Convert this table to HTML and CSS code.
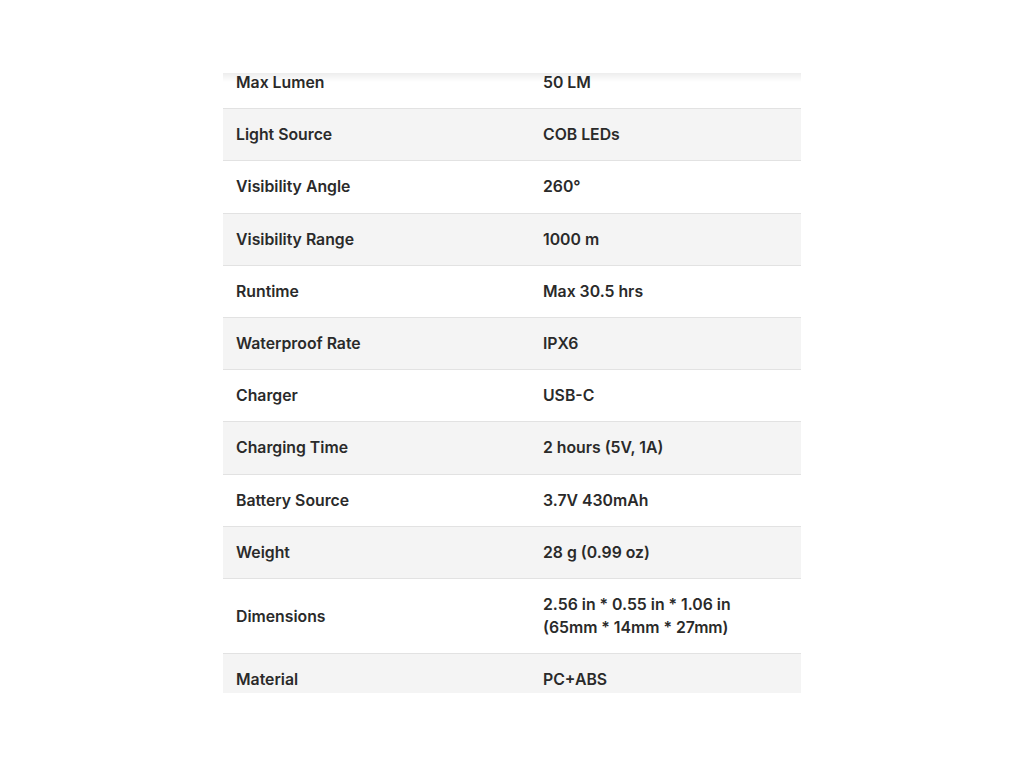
FILE: index.html
```html
<!DOCTYPE html>
<html lang="en">
<head>
<meta charset="utf-8">
<title>Specifications</title>
<link rel="stylesheet" href="styles.css">
</head>
<body>
<div class="page">
  <div class="viewport">
    <div class="fade"></div>
    <table class="specs">
      <tbody>
        <tr><th>Max Lumen</th><td>50 LM</td></tr>
        <tr><th>Light Source</th><td>COB LEDs</td></tr>
        <tr><th>Visibility Angle</th><td>260°</td></tr>
        <tr><th>Visibility Range</th><td>1000 m</td></tr>
        <tr><th>Runtime</th><td>Max 30.5 hrs</td></tr>
        <tr><th>Waterproof Rate</th><td>IPX6</td></tr>
        <tr><th>Charger</th><td>USB-C</td></tr>
        <tr><th>Charging Time</th><td>2 hours (5V, 1A)</td></tr>
        <tr><th>Battery Source</th><td>3.7V 430mAh</td></tr>
        <tr><th>Weight</th><td>28 g (0.99 oz)</td></tr>
        <tr><th>Dimensions</th><td>2.56 in * 0.55 in * 1.06 in<br>(65mm * 14mm * 27mm)</td></tr>
        <tr><th>Material</th><td>PC+ABS</td></tr>
      </tbody>
    </table>
  </div>
</div>
</body>
</html>
```
FILE: styles.css
```css
html, body {
  margin: 0;
  padding: 0;
  background: #ffffff;
}
.page {
  padding-top: 73px;
}
.viewport {
  position: relative;
  width: 578px;
  height: 620px;
  margin: 0 auto;
  overflow: hidden;
}
.fade {
  position: absolute;
  left: 0;
  right: 0;
  top: 0;
  height: 9px;
  background: linear-gradient(to bottom, rgba(0,0,0,0.07), rgba(0,0,0,0));
  z-index: 2;
}
.specs {
  width: 100%;
  margin-top: -16px;
  border-collapse: collapse;
  font-family: "Inter", "Open Sans", sans-serif;
  font-weight: 600;
  font-size: 15.8px;
  line-height: 23.2px;
  color: #2a2a2a;
}
.specs tr {
  border-bottom: 1px solid #e2e2e2;
}
.specs tr:nth-child(even) {
  background: #f4f4f4;
}
.specs th,
.specs td {
  text-align: left;
  vertical-align: middle;
  padding: 14px 13px 14px 13px;
  font-weight: 600;
}
.specs th {
  width: 281px;
}
```
